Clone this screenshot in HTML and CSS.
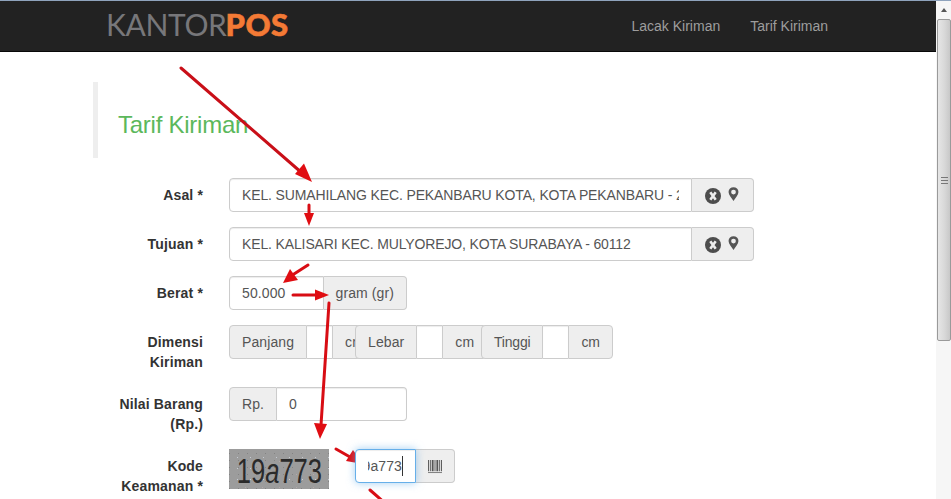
FILE: index.html
```html
<!DOCTYPE html>
<html lang="id">
<head>
<meta charset="utf-8">
<title>Tarif Kiriman</title>
<link rel="stylesheet" href="styles.css">
</head>
<body>
<div class="window">
  <div class="page">
    <nav class="navbar">
      <a class="logo"><span class="logo-a">KANTOR</span><span class="logo-b">POS</span></a>
      <div class="nav-links"><a>Lacak Kiriman</a><a>Tarif Kiriman</a></div>
    </nav>
    <main class="content">
      <blockquote class="quote"><h3>Tarif Kiriman</h3></blockquote>
      <form class="form">
        <div class="row">
          <label class="lbl">Asal *</label>
          <div class="group wide">
            <input class="ctl grow caps" value="KEL. SUMAHILANG KEC. PEKANBARU KOTA, KOTA PEKANBARU - 28124">
            <span class="addon icons">
              <svg class="ico-x" viewBox="0 0 16 16" width="16" height="16"><circle cx="8" cy="8" r="8" fill="#4d4d4d"/><path d="M5.300 4.300 L10.700 11.700 M10.700 4.300 L5.300 11.700" stroke="#eee" stroke-width="2.600"/></svg>
              <svg class="ico-pin" viewBox="0 0 12 15" width="11" height="14"><path fill-rule="evenodd" fill="#555" d="M6 0a5.400 5.400 0 0 1 5.400 5.400C11.400 8.600 8 12 6 15 4 12 .6 8.600.6 5.400A5.400 5.400 0 0 1 6 0zm0 2.800a2.600 2.600 0 1 0 0 5.200 2.600 2.600 0 0 0 0-5.200z"/></svg>
            </span>
          </div>
        </div>
        <div class="row">
          <label class="lbl">Tujuan *</label>
          <div class="group wide">
            <input class="ctl grow caps" value="KEL. KALISARI KEC. MULYOREJO, KOTA SURABAYA - 60112">
            <span class="addon icons">
              <svg class="ico-x" viewBox="0 0 16 16" width="16" height="16"><circle cx="8" cy="8" r="8" fill="#4d4d4d"/><path d="M5.300 4.300 L10.700 11.700 M10.700 4.300 L5.300 11.700" stroke="#eee" stroke-width="2.600"/></svg>
              <svg class="ico-pin" viewBox="0 0 12 15" width="11" height="14"><path fill-rule="evenodd" fill="#555" d="M6 0a5.400 5.400 0 0 1 5.400 5.400C11.400 8.600 8 12 6 15 4 12 .6 8.600.6 5.400A5.400 5.400 0 0 1 6 0zm0 2.800a2.600 2.600 0 1 0 0 5.200 2.600 2.600 0 0 0 0-5.200z"/></svg>
            </span>
          </div>
        </div>
        <div class="row">
          <label class="lbl">Berat *</label>
          <div class="group medium">
            <input class="ctl grow" value="50.000">
            <span class="addon">gram (gr)</span>
          </div>
        </div>
        <div class="row">
          <label class="lbl">Dimensi Kiriman</label>
          <div class="dims">
            <div class="dim"><div class="group"><span class="addon">Panjang</span><input class="ctl tiny"><span class="addon">cm</span></div></div>
            <div class="dim"><div class="group"><span class="addon">Lebar</span><input class="ctl tiny"><span class="addon">cm</span></div></div>
            <div class="dim"><div class="group"><span class="addon tight">Tinggi</span><input class="ctl tiny"><span class="addon tight">cm</span></div></div>
          </div>
        </div>
        <div class="row">
          <label class="lbl">Nilai Barang (Rp.)</label>
          <div class="group medium">
            <span class="addon">Rp.</span>
            <input class="ctl grow" value="0">
          </div>
        </div>
        <div class="row">
          <label class="lbl">Kode Keamanan *</label>
          <div class="captcha"><span class="captcha-text">19<i>a</i>773</span></div>
          <div class="group code">
            <div class="ctl focus"><div class="clip"><span class="typed">19a773</span></div></div>
            <span class="addon icons">
              <svg viewBox="0 0 15 16" width="14" height="15"><path fill="#555" d="M0 1h1v12H0zM2 1h1v12H2zM4 1h2v12H4zM7 1h1v12H7zM9 1h2v12H9zM12 1h1v12h-1zM14 1h1v12h-1z"/><path fill="#777" d="M0 14h15v1H0z"/></svg>
            </span>
          </div>
        </div>
      </form>
    </main>
    <svg class="arrows" viewBox="0 0 936 499" width="936" height="499" aria-hidden="true">
      <g stroke="#d80d14" stroke-width="3" fill="#e00d12" stroke-linecap="round">
        <path stroke="#c90f18" d="M181 67 L302 172"/><path stroke="none" d="M312 181 L295 173 L304 162.500z"/>
        <path d="M309 204 L309 214"/><path stroke="none" d="M309 225 L304 212 L314 212z"/>
        <path d="M308 264 L294 273"/><path stroke="none" d="M283 282 L290 268 L298 279z"/>
        <path d="M293 294 L316 294"/><path stroke="none" d="M329 294 L315 288.500 L315 299.500z"/>
        <path d="M329 302 L321 424"/><path stroke="none" d="M320 438 L314 422 L327 423z"/>
        <path d="M336 448 L350 456"/><path stroke="none" d="M363 463 L346 460 L353 449z"/>
        <path d="M370 489 L386 503"/>
      </g>
    </svg>
  </div>
  <div class="scrollbar">
    <div class="sb-btn"><span class="sb-up"></span></div>
    <div class="sb-thumb"><span class="sb-grip"></span></div>
    <div class="sb-track"></div>
  </div>
</div>
</body>
</html>
```
FILE: styles.css
```css
* { box-sizing: border-box; }
html, body { margin: 0; height: 100%; overflow: hidden; background: #fff; }
body { font: 14px/20px "Liberation Sans", Arial, sans-serif; color: #333; }
.window { display: flex; height: 499px; border-top: 1px solid #8fa3bd; }
.page { position: relative; width: 936px; flex: none; overflow: hidden; }
.navbar { display: flex; justify-content: space-between; align-items: center; height: 51px; padding: 0 108px 0 106px; background: #222; border-bottom: 1px solid #080808; }
.logo { display: flex; align-items: baseline; margin-top: -3px; font-family: Lato, sans-serif; font-size: 30px; line-height: 1; }
.logo-a { color: #77777a; font-weight: 400; letter-spacing: -.35px; }
.logo-b { margin-left: -1px; color: #f47a35; font-size: 31px; font-weight: 900; letter-spacing: .4px; -webkit-text-stroke: .6px #f47a35; }
.nav-links { display: flex; gap: 30px; color: #9d9d9d; }
.content { padding: 30px 0 0 93px; }
.quote { margin: 0 0 20px; height: 76px; padding: 0 0 0 20px; border-left: 5px solid #eee; display: flex; align-items: center; }
.quote h3 { margin: 9px 0 0; font-size: 24px; font-weight: 400; line-height: 26px; letter-spacing: -.25px; color: #5cb85c; }
.form { display: flex; flex-direction: column; gap: 15px; }
.row { display: flex; align-items: flex-start; }
.lbl { width: 110px; flex: none; margin-right: 26px; padding: 7px 0 0 5px; font-weight: 700; text-align: right; letter-spacing: .15px; }
.group { display: flex; height: 34px; }
.wide { width: 525px; }
.medium { width: 178px; }
.code { width: 100px; margin-left: 26px; }
.ctl { height: 34px; padding: 6px 12px; border: 1px solid #ccc; background: #fff; color: #555; font: inherit; letter-spacing: .1px; outline: 0; box-shadow: inset 0 1px 1px rgba(0,0,0,.075); }
.grow { flex: 1; min-width: 0; border-radius: 4px 0 0 4px; }
.caps { letter-spacing: -.135px; }
.addon + .grow { border-radius: 0 4px 4px 0; border-left: 0; }
.tiny { width: 25px; flex: none; padding: 0; border-left: 0; border-right: 0; }
.addon { flex: none; display: flex; align-items: center; padding: 6px 12px; border: 1px solid #ccc; background: #eee; color: #555; white-space: nowrap; letter-spacing: .1px; }
.addon.tight { letter-spacing: -.2px; }
.grow + .addon, .focus + .addon { border-left: 0; border-radius: 0 4px 4px 0; }
.group > .addon:first-child { border-radius: 4px 0 0 4px; }
.group > .addon:last-child { border-radius: 0 4px 4px 0; }
.icons { gap: 7px; width: 62px; padding: 0 0 0 13px; }
.code .icons { width: 39px; padding: 0 0 0 12px; }
.ico-pin { margin-top: -3px; }
.ico-x { margin-top: 2px; }
.dims { display: flex; }
.dim { width: 126px; flex: none; }
.captcha {
  display: flex; justify-content: center;
  width: 100px; height: 40px; flex: none; color: #2a2a2a;
  background-color: #9c9c9c;
  background-image: radial-gradient(circle, #c7ccd4 .6px, transparent 1px), radial-gradient(circle, #838383 .6px, transparent 1px), radial-gradient(circle, #b4a9a9 .6px, transparent 1px);
  background-size: 13px 11px, 9px 7px, 17px 13px;
  background-position: 2px 3px, 5px 1px, 8px 6px;
}
.captcha-text { flex: none; font-size: 35px; line-height: 44px; transform: scaleX(.73); }
.focus { flex: none; width: 61px; border-color: #66afe9; border-radius: 4px 0 0 4px; box-shadow: inset 0 1px 1px rgba(0,0,0,.075), 0 0 8px rgba(102,175,233,.6); position: relative; z-index: 1; }
.clip { display: flex; justify-content: flex-end; overflow: hidden; }
.typed { flex: none; border-right: 1px solid #333; }
.arrows { position: absolute; top: 0; left: 0; pointer-events: none; }
.scrollbar { width: 15px; flex: none; display: flex; flex-direction: column; padding-left: 1px; background: #f6f6f6; }
.sb-btn { height: 18px; display: flex; align-items: center; justify-content: center; }
.sb-up { border: 3px solid transparent; border-top: 0; border-bottom: 4px solid #555; }
.sb-thumb { height: 322px; display: flex; align-items: center; justify-content: center; background: linear-gradient(90deg, #e6e6e6, #d8d8d8 55%, #c8c8c8); border: 1px solid #9a9a9a; border-radius: 2px; }
.sb-grip { width: 7px; height: 7px; border-top: 1px solid #777; border-bottom: 1px solid #777; background: linear-gradient(#777,#777) center/100% 1px no-repeat; }
.sb-track { flex: 1; }
```
